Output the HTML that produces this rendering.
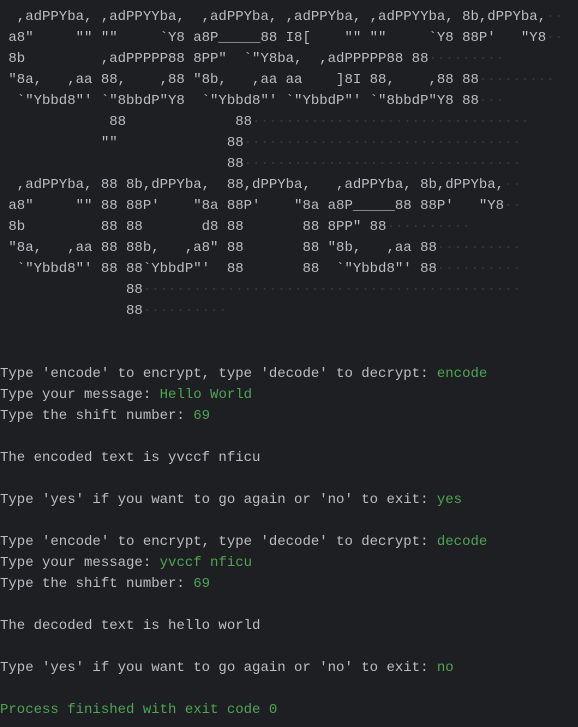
<!DOCTYPE html>
<html><head><meta charset="utf-8"><style>
html,body{margin:0;padding:0;background:#1e1f22;width:578px;height:727px;overflow:hidden}
pre{margin:0;padding:7px 0 0 0;font-family:"Liberation Mono","DejaVu Sans Mono",monospace;font-size:14px;line-height:21px;color:#bcbec4;white-space:pre}
.g{color:#4ca653}
.d{color:#36383c}
</style></head><body><pre>  ,adPPYba, ,adPPYYba,  ,adPPYba, ,adPPYba, ,adPPYYba, 8b,dPPYba,<span class="d">··</span>
 a8"     "" ""     `Y8 a8P_____88 I8[    "" ""     `Y8 88P'   "Y8<span class="d">··</span>
 8b         ,adPPPPP88 8PP"  `"Y8ba,  ,adPPPPP88 88<span class="d">·········</span>
 "8a,   ,aa 88,    ,88 "8b,   ,aa aa    ]8I 88,    ,88 88<span class="d">·········</span>
  `"Ybbd8"' `"8bbdP"Y8  `"Ybbd8"' `"YbbdP"' `"8bbdP"Y8 88<span class="d">···</span>
             88             88<span class="d">·································</span>
            ""             88<span class="d">·································</span>
                           88<span class="d">·································</span>
  ,adPPYba, 88 8b,dPPYba,  88,dPPYba,   ,adPPYba, 8b,dPPYba,<span class="d">··</span>
 a8"     "" 88 88P'    "8a 88P'    "8a a8P_____88 88P'   "Y8<span class="d">··</span>
 8b         88 88       d8 88       88 8PP" 88<span class="d">··········</span>
 "8a,   ,aa 88 88b,   ,a8" 88       88 "8b,   ,aa 88<span class="d">··········</span>
  `"Ybbd8"' 88 88`YbbdP"'  88       88  `"Ybbd8"' 88<span class="d">··········</span>
               88<span class="d">·············································</span>
               88<span class="d">··········</span>


Type 'encode' to encrypt, type 'decode' to decrypt: <span class="g">encode</span>
Type your message: <span class="g">Hello World</span>
Type the shift number: <span class="g">69</span>

The encoded text is yvccf nficu

Type 'yes' if you want to go again or 'no' to exit: <span class="g">yes</span>

Type 'encode' to encrypt, type 'decode' to decrypt: <span class="g">decode</span>
Type your message: <span class="g">yvccf nficu</span>
Type the shift number: <span class="g">69</span>

The decoded text is hello world

Type 'yes' if you want to go again or 'no' to exit: <span class="g">no</span>

<span class="g">Process finished with exit code 0</span>
</pre></body></html>
